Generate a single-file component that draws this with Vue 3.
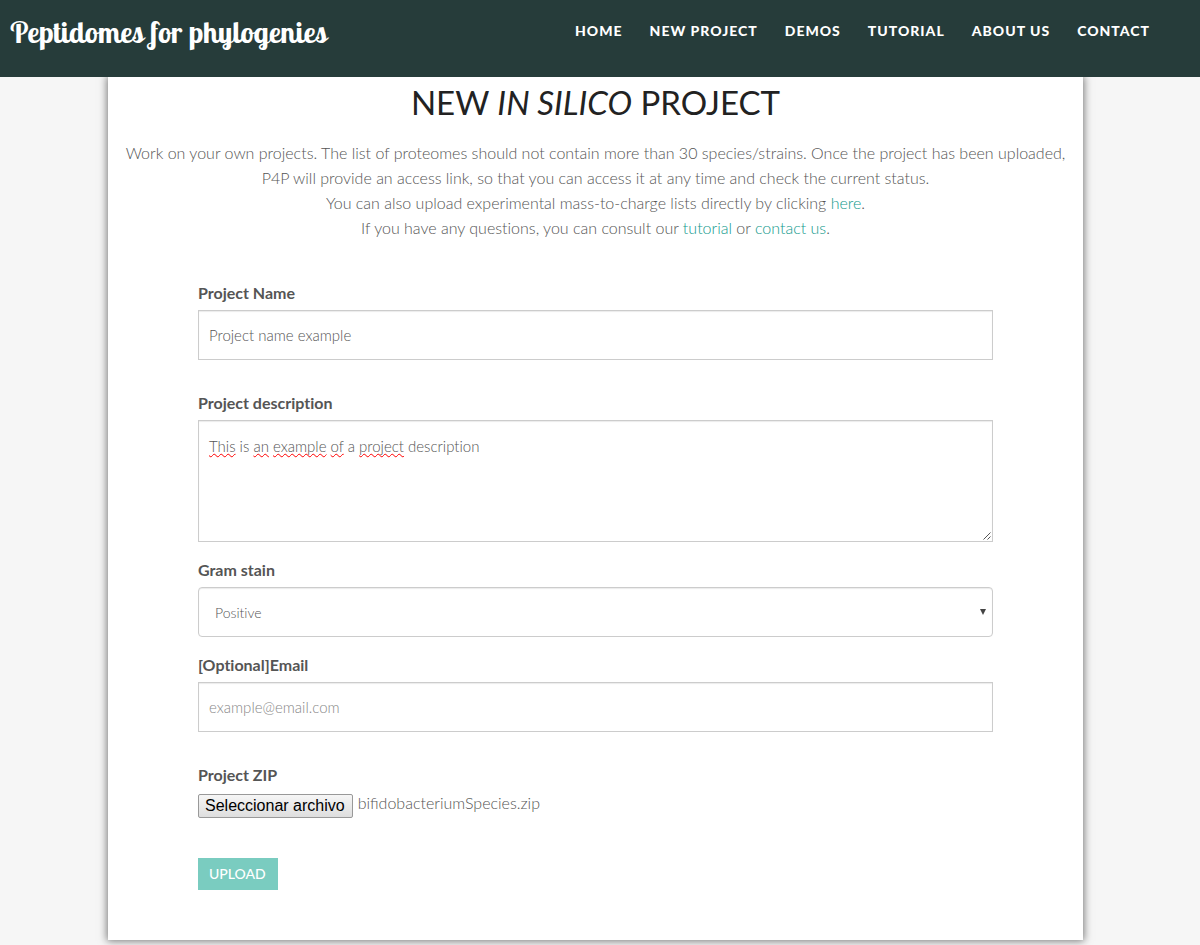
<script setup>
import { ref, computed } from 'vue'

const links = ['Home', 'New project', 'Demos', 'Tutorial', 'About us', 'Contact']
const name = ref('Project name example')
const description = ref('This is an example of a project description')
const stain = ref('Positive')
const email = ref('')
const fileName = ref('bifidobacteriumSpecies.zip')

const misspelled = ['This', 'an', 'example', 'of', 'project']
const words = computed(() =>
  description.value.split(/(\s+)/).map((text) => ({ text, bad: misspelled.includes(text) }))
)

function pickFile(event) {
  const file = event.target.files[0]
  if (file) fileName.value = file.name
}
</script>

<template>
  <div class="page">
    <header class="topbar">
      <a class="brand" href="#">Peptidomes for phylogenies</a>
      <nav class="menu">
        <a v-for="link in links" :key="link" href="#">{{ link }}</a>
      </nav>
    </header>

    <main class="card">
      <h1>New <em>in silico</em> project</h1>
      <p class="intro">
        Work on your own projects. The list of proteomes should not contain more than 30 species/strains. Once the project has been uploaded,<br />
        P4P will provide an access link, so that you can access it at any time and check the current status.<br />
        You can also upload experimental mass-to-charge lists directly by clicking <a href="#">here</a>.<br />
        If you have any questions, you can consult our <a href="#">tutorial</a> or <a href="#">contact us</a>.
      </p>

      <form @submit.prevent>
        <div class="field spaced">
          <label for="name">Project Name</label>
          <input id="name" v-model="name" class="control" type="text" />
        </div>

        <div class="field">
          <label for="description">Project description</label>
          <div class="editor">
            <textarea id="description" v-model="description" class="control" spellcheck="false"></textarea>
            <div class="marks" aria-hidden="true"><span v-for="(word, i) in words" :key="i" :class="{ bad: word.bad }">{{ word.text }}</span></div>
            <svg class="grip" viewBox="0 0 8 8" aria-hidden="true"><path d="M0.5 7.5 L7.5 0.5 M4.5 7.5 L7.5 4.5" /></svg>
          </div>
        </div>

        <div class="field">
          <label for="stain">Gram stain</label>
          <div class="picker">
            <select id="stain" v-model="stain" class="control">
              <option>Positive</option>
              <option>Negative</option>
            </select>
            <svg class="arrow" viewBox="0 0 6 6" aria-hidden="true"><path d="M0 0 H6 L3 6 Z" /></svg>
          </div>
        </div>

        <div class="field spaced">
          <label for="email">[Optional]Email</label>
          <input id="email" v-model="email" class="control" type="email" placeholder="example@email.com" />
        </div>

        <div class="field">
          <span class="caption">Project ZIP</span>
          <div class="file">
            <input id="zip" type="file" accept=".zip" @change="pickFile" />
            <label class="choose" for="zip">Seleccionar archivo</label>
            <span class="filename">{{ fileName }}</span>
          </div>
        </div>

        <button class="upload" type="submit">Upload</button>
      </form>
    </main>
  </div>
</template>

<style>
body {
  background: #f6f6f6;
}
</style>

<style scoped>
.page {
  font-family: Lato, "Liberation Sans", sans-serif;
  font-size: 16px;
  font-weight: 300;
  line-height: 25px;
  font-variant-ligatures: none;
  color: #555;
  padding-bottom: 5px;
}
.page *,
.page {
  box-sizing: border-box;
}
.topbar {
  position: relative;
  z-index: 1;
  display: flex;
  justify-content: space-between;
  align-items: flex-start;
  min-height: 77px;
  padding: 12px 50px 0 10px;
  background: #263c3a;
}
.brand {
  font-family: "Lobster Two", Lobster, "Liberation Serif", serif;
  font-size: 30px;
  font-weight: 700;
  line-height: 40px;
  color: #fff;
  text-decoration: none;
  white-space: nowrap;
}
.menu {
  display: flex;
  gap: 27px;
  padding-top: 7px;
}
.menu a {
  font-size: 14px;
  font-weight: 900;
  line-height: 24px;
  letter-spacing: 1px;
  text-transform: uppercase;
  color: #fff;
  text-decoration: none;
  white-space: nowrap;
}
.card {
  margin: 0 117px 0 108px;
  padding: 5px 10px 50px;
  background: #fff;
  box-shadow: 0 0 8px 1px #777;
}
h1 {
  margin: 0;
  font-size: 33px;
  font-weight: 400;
  line-height: 40px;
  text-align: center;
  text-transform: uppercase;
  color: #222;
}
.intro {
  margin: 18px 0 40px;
  text-align: center;
}
.intro a {
  color: #129a8d;
  text-decoration: none;
}
form {
  padding: 0 80px;
}
.field {
  margin-bottom: 15px;
}
.field.spaced {
  margin-bottom: 30px;
}
.field > label,
.caption {
  display: block;
  margin-bottom: 5px;
  font-weight: 700;
}
.control {
  display: block;
  width: 100%;
  height: 50px;
  margin: 0;
  padding: 0 10px;
  border: 1px solid #ccc;
  border-radius: 0;
  background: #fff;
  box-shadow: inset 0 1px 1px rgba(0, 0, 0, 0.08);
  font: inherit;
  font-size: 15px;
  font-variant-ligatures: none;
  color: #555;
  outline: none;
}
.control::placeholder {
  color: #888;
  opacity: 1;
}
.editor,
.picker {
  position: relative;
}
textarea.control {
  height: 122px;
  padding: 13px 10px;
  resize: none;
}
.marks {
  position: absolute;
  inset: 0;
  padding: 14px 11px;
  font-size: 15px;
  white-space: pre-wrap;
  color: transparent;
  pointer-events: none;
}
.bad {
  text-decoration: underline wavy #f00 1px;
  text-decoration-skip-ink: none;
  text-underline-offset: 1px;
}
.grip {
  position: absolute;
  right: 2px;
  bottom: 2px;
  width: 8px;
  height: 8px;
  fill: none;
  stroke: #555;
}
select.control {
  appearance: none;
  padding: 0 16px;
  border-radius: 4px;
  font-size: 14px;
}
.arrow {
  position: absolute;
  right: 7px;
  top: 22px;
  width: 6px;
  height: 6px;
  fill: #444;
  pointer-events: none;
}
.file {
  position: relative;
  display: flex;
  align-items: flex-start;
  gap: 5px;
}
.file input {
  position: absolute;
  width: 1px;
  height: 1px;
  opacity: 0;
}
.choose {
  margin-top: 2px;
  padding: 0 7px 0 6px;
  border: 1px solid #999;
  border-radius: 2px;
  background: linear-gradient(#f6f6f6, #dedede);
  font-family: "Liberation Sans", Arial, sans-serif;
  font-weight: 400;
  line-height: 22px;
  color: #000;
}
.filename {
  line-height: 22px;
  font-variant-ligatures: normal;
}
.upload {
  display: block;
  height: 32px;
  margin-top: 40px;
  padding: 0 12px 2px 11px;
  border: 0;
  background: #7accc0;
  font: inherit;
  font-size: 14px;
  font-weight: 500;
  text-transform: uppercase;
  color: #fff;
}
</style>
